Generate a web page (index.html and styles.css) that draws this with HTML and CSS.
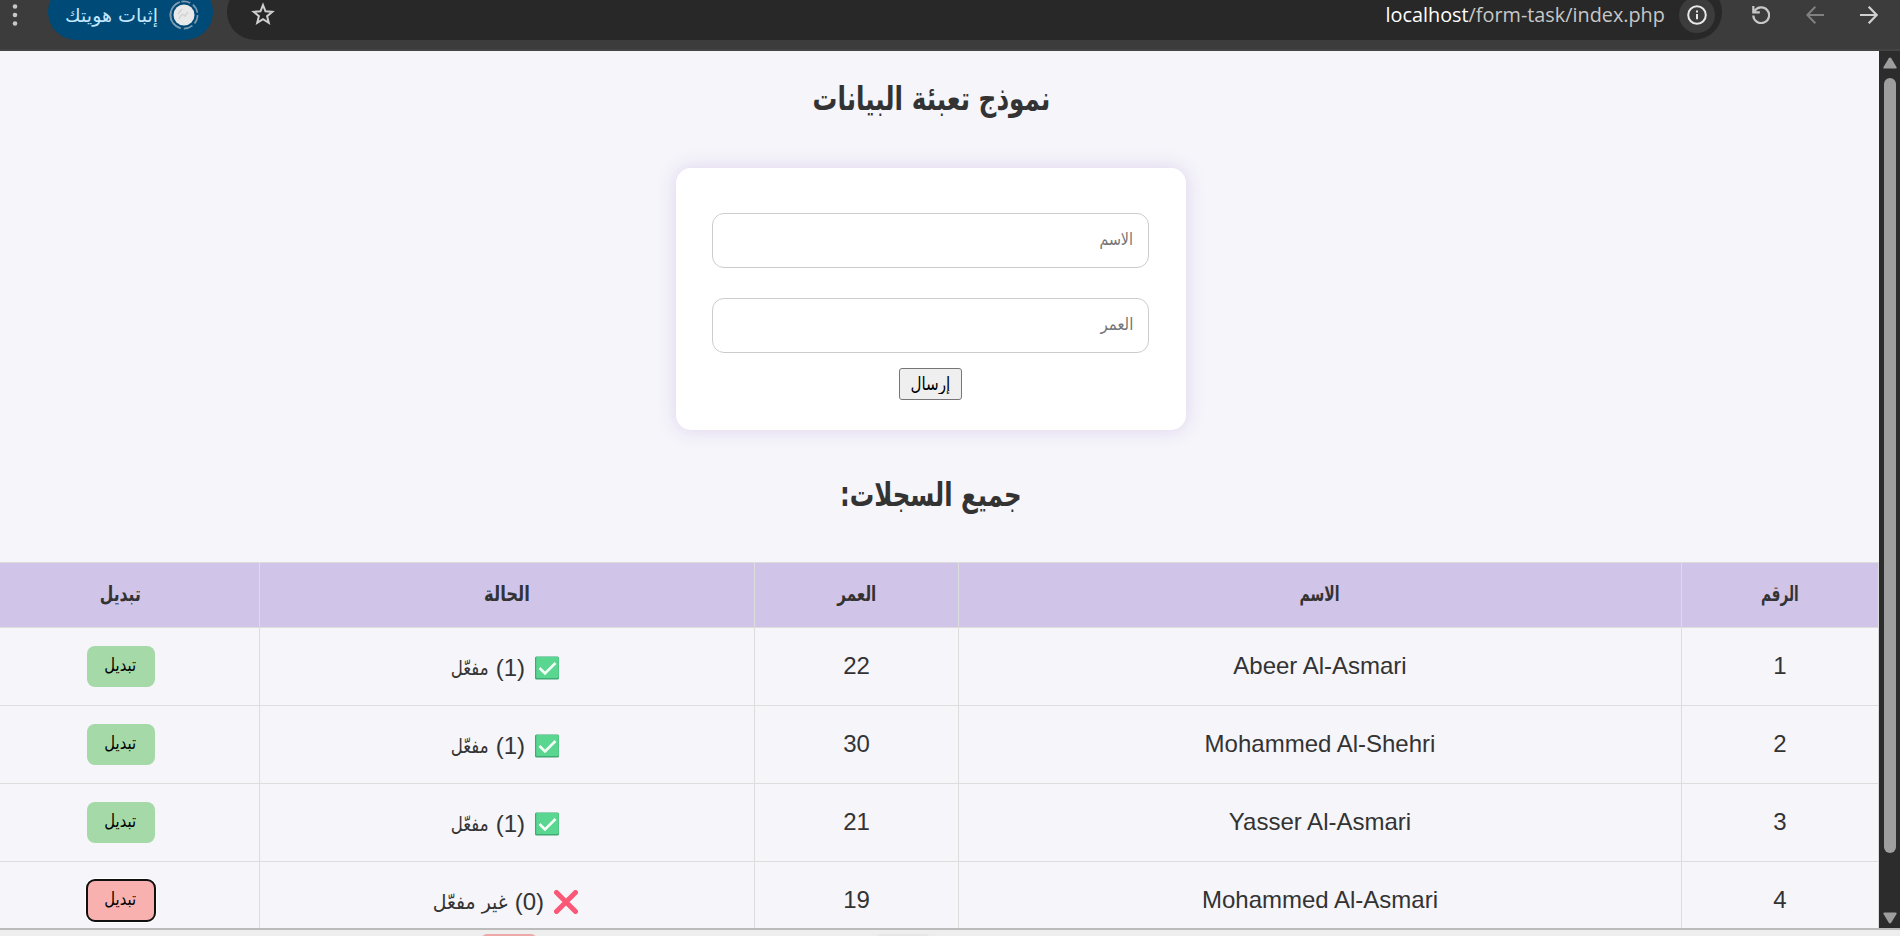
FILE: index.html
```html
<!DOCTYPE html>
<html lang="ar" dir="rtl">
<head>
<meta charset="utf-8">
<title>نموذج تعبئة البيانات</title>
<link rel="stylesheet" href="styles.css">
</head>
<body>
<div class="toolbar">
  <svg class="dots" width="6" height="24" viewBox="0 0 6 24"><circle cx="3" cy="3.5" r="2.3"/><circle cx="3" cy="12" r="2.3"/><circle cx="3" cy="20.5" r="2.3"/></svg>
  <div class="profile">
    <span class="ar verify" dir="rtl">إثبات هويتك</span>
    <svg width="30" height="30" viewBox="0 0 30 30"><circle cx="15" cy="15" r="13.6" fill="none" stroke="#7f9bb0" stroke-width="1.6" stroke-dasharray="9.2 3"/><path d="M11 2A13.6 13.6 0 0 0 11 28" fill="none" stroke="#7f9bb0" stroke-width="1.6"/><circle cx="15" cy="15" r="10.5" fill="#e9e9e9"/><path d="M10 19q3-7 6-3l3-4M9 14l4-5" fill="none" stroke="#d4d4d2" stroke-width="1.5"/></svg>
  </div>
  <div class="address">
    <svg class="star" width="24" height="24" viewBox="0 0 24 24"><path d="M12 3l2.5 6.3 6.8.5-5.2 4.4 1.7 6.6L12 17.2l-5.8 3.6 1.7-6.6-5.2-4.4 6.800-.5z" fill="none" stroke="#d0d0d0" stroke-width="2"/></svg>
    <span class="url"><b>localhost</b>/form-task/index.php</span>
    <span class="info"><svg width="20" height="20" viewBox="0 0 20 20"><circle cx="10" cy="10" r="8.800" fill="none" stroke="#e8e8e8" stroke-width="2"/><path d="M10 9v5.300M10 5.500v2" stroke="#e8e8e8" stroke-width="2"/></svg></span>
  </div>
  <svg class="reload" width="18" height="18" viewBox="0 0 18 18"><path d="M2.500 5A7.900 7.900 0 1 1 1.300 9.500M1.300 0v6.300h6.500" fill="none" stroke="#c7c7c7" stroke-width="2.200"/></svg>
  <svg class="back" width="18" height="18" viewBox="0 0 18 18"><path d="M18 9H1.500M9.300.7L1.300 9l8 8.300" fill="none" stroke="#808080" stroke-width="2"/></svg>
  <svg class="forward" width="18" height="18" viewBox="0 0 18 18"><path d="M0 9h16.500M8.700.7L16.700 9l-8 8.300" fill="none" stroke="#d0d0d0" stroke-width="2.200"/></svg>
</div>
<div class="viewport">
  <main class="page">
    <h1><span class="ar t-title">نموذج تعبئة البيانات</span></h1>
    <form class="card">
      <div class="field"><span class="ar t-name">الاسم</span></div>
      <div class="field"><span class="ar t-age">العمر</span></div>
      <button type="button" class="send"><span class="ar t-send">إرسال</span></button>
    </form>
    <h2><span class="ar t-records">جميع السجلات:</span></h2>
    <table>
      <colgroup><col class="c-id"><col class="c-name"><col class="c-age"><col class="c-state"><col class="c-toggle"></colgroup>
      <tr><th><span class="ar t-h1">الرقم</span></th><th><span class="ar t-h2">الاسم</span></th><th><span class="ar t-h3">العمر</span></th><th><span class="ar t-h4">الحالة</span></th><th><span class="ar t-h5">تبديل</span></th></tr>
      <tr><td>1</td><td>Abeer Al-Asmari</td><td>22</td><td><div class="state"><svg class="mark" viewBox="0 0 24 24"><rect y=".5" width="24" height="23" rx="1.500" fill="#3faa74"/><rect x="1.200" y="1" width="22.500" height="21" rx="1" fill="#59d68f"/><path d="M4.500 12l5.500 5.500L20.500 7" fill="none" stroke="#f4fff8" stroke-width="2.600"/></svg><span>(1)</span><span class="ar t-on">مفعّل</span></div></td><td><button type="button" class="toggle"><span class="ar t-btn">تبديل</span></button></td></tr>
      <tr><td>2</td><td>Mohammed Al-Shehri</td><td>30</td><td><div class="state"><svg class="mark" viewBox="0 0 24 24"><rect y=".5" width="24" height="23" rx="1.500" fill="#3faa74"/><rect x="1.200" y="1" width="22.500" height="21" rx="1" fill="#59d68f"/><path d="M4.500 12l5.500 5.500L20.500 7" fill="none" stroke="#f4fff8" stroke-width="2.600"/></svg><span>(1)</span><span class="ar t-on">مفعّل</span></div></td><td><button type="button" class="toggle"><span class="ar t-btn">تبديل</span></button></td></tr>
      <tr><td>3</td><td>Yasser Al-Asmari</td><td>21</td><td><div class="state"><svg class="mark" viewBox="0 0 24 24"><rect y=".5" width="24" height="23" rx="1.500" fill="#3faa74"/><rect x="1.200" y="1" width="22.500" height="21" rx="1" fill="#59d68f"/><path d="M4.500 12l5.500 5.500L20.500 7" fill="none" stroke="#f4fff8" stroke-width="2.600"/></svg><span>(1)</span><span class="ar t-on">مفعّل</span></div></td><td><button type="button" class="toggle"><span class="ar t-btn">تبديل</span></button></td></tr>
      <tr><td>4</td><td>Mohammed Al-Asmari</td><td>19</td><td><div class="state inactive"><svg class="mark" viewBox="0 0 24 24"><path d="M2.500 2.500l19 19M21.500 2.500l-19 19" fill="none" stroke="#fb5878" stroke-width="5" stroke-linecap="round"/></svg><span>(0)</span><span class="ar t-off">غير مفعّل</span></div></td><td><button type="button" class="toggle off"><span class="ar t-btn">تبديل</span></button></td></tr>
    </table>
  </main>
  <div class="scrollbar">
    <svg width="14" height="12" viewBox="0 0 14 12"><path d="M5.800 1.300Q7-.3 8.200 1.300L13.500 10q.5 1.500-1 1.500h-11q-1.500 0-1-1.500z" fill="#9e9e9e"/></svg>
    <div class="thumb"></div>
    <svg width="14" height="12" viewBox="0 0 14 12"><path d="M5.800 10.700Q7 12.300 8.200 10.700L13.500 2q.5-1.500-1-1.500h-11q-1.500 0-1 1.500z" fill="#9e9e9e"/></svg>
  </div>
</div>
<div class="taskbar"><div class="task red"></div><div class="task gray"></div></div>
</body>
</html>
```
FILE: styles.css
```css
* { box-sizing: border-box; }
body { margin: 0; height: 936px; overflow: hidden; font-family: "Liberation Sans", "DejaVu Sans", sans-serif; color: #333; background: #f5f5fa; }
svg { display: block; flex: none; }
.ar { display: inline-block; white-space: nowrap; font-family: "DejaVu Sans", sans-serif; }
.toolbar { direction: ltr; display: flex; align-items: flex-start; height: 51px; background: #3c3c3c; border-bottom: 2px solid #444; overflow: hidden; }
.dots { margin: 3px 0 0 12px; fill: #c7c7c7; }
.profile { display: flex; align-items: center; justify-content: flex-end; gap: 11px; width: 165px; height: 56px; margin: -16px 0 0 30px; padding: 6px 14px 0 0; border-radius: 28px; background: #004a77; color: #c2e7ff; }
.verify { font-size: 19px; }
.address { display: flex; align-items: flex-start; width: 1495px; height: 56px; margin: -16px 0 0 14px; border-radius: 28px; background: #282828; }
.star { margin: 18px 0 0 24px; }
.url { margin: 16px 14px 0 auto; font-family: "Open Sans", sans-serif; font-size: 20.5px; line-height: 28px; color: #c7c7c7; transform: scaleX(.967); transform-origin: right; }
.url b { font-weight: 400; color: #fff; }
.info { display: grid; place-items: center; width: 36px; height: 36px; margin: 13px 7px 0 0; border-radius: 50%; background: #3c3c3c; }
.reload { margin: 6px 0 0 30px; }
.back { margin: 6px 0 0 36px; }
.forward { margin: 6px 0 0 36px; }
.viewport { display: flex; direction: ltr; height: 877px; overflow: hidden; }
.page { direction: rtl; flex: none; width: 1879px; overflow: hidden; background: #f5f5fa; }
h1, h2 { margin: 0; padding-right: 17px; text-align: center; line-height: 40px; font-size: 30px; }
h1 { margin-top: 28px; }
.card { direction: ltr; display: flex; flex-direction: column; align-items: center; width: 510px; height: 262px; margin: 49px 693px 0 0; padding: 45px 1px 0 0; border-radius: 15px; background: #fff; box-shadow: 0 0 19px rgba(128, 60, 180, .18); }
.field { direction: rtl; width: 437px; height: 55px; padding: 13px 15px; border: 1px solid #ccc; border-radius: 12px; color: #757575; font-size: 17px; line-height: 24px; }
.field + .field { margin: 30px 0 15px; }
.send { display: grid; place-items: center; width: 63px; height: 32px; padding: 0 0 3px; border: 1px solid #767676; border-radius: 3px; background: #efefef; color: #000; font-size: 17px; }
h2 { margin-top: 45px; }
table { direction: rtl; width: 1897px; margin: 47px 0 0 0; border-collapse: collapse; table-layout: fixed; font-size: 24px; }
.c-id { width: 197px; } .c-name { width: 723px; } .c-age { width: 204px; } .c-state { width: 495px; } .c-toggle { width: 278px; }
th, td { padding: 0; border: 1px solid #ddd; text-align: center; }
th { height: 65px; padding-bottom: 3px; background: #d1c4e9; font-size: 20px; }
td { height: 78px; padding-bottom: 2px; line-height: 28px; }
td:last-child { padding-bottom: 0; }
.state { display: flex; justify-content: flex-start; align-items: center; padding: 4px 195px 0 0; }
.inactive { padding-right: 176px; }
.mark { width: 24px; height: 24px; margin-left: 10px; }
.state .ar { margin-right: 7px; font-size: 20px; transform-origin: right; }
.toggle { display: inline-grid; place-items: center; width: 68px; height: 41px; padding: 0 0 4px; border: 0; border-radius: 8px; background: #a5d9a7; color: #000; font-size: 17px; vertical-align: middle; }
.off { background: #f8b1af; outline: 2px solid #101010; outline-offset: -1px; box-shadow: 0 0 0 2px #fff; }
/* Condensed Arabic labels */
.t-title { transform: scale(.823, 1.1); }
.t-records { transform: scale(.813, 1.1); }
.t-name { transform: scaleX(.84); transform-origin: right; }
.t-age { transform: scaleX(.88); transform-origin: right; }
.t-send { transform: scale(.89, 1.1); }
.t-h1 { transform: scale(.68, 1.05); }
.t-h2 { transform: scale(.7, 1.05); }
.t-h3 { transform: scale(.76, 1.05); }
.t-h4 { transform: scale(.82, 1.05); }
.t-h5 { transform: scale(.78, 1.05); }
.t-on { transform: scaleX(.83); }
.t-off { transform: scaleX(.94); }
.t-btn { transform: scale(.87, 1.05); }
.scrollbar { display: flex; flex: none; flex-direction: column; align-items: center; width: 21px; padding-top: 6px; background: #2c2c2c; }
.thumb { flex: none; width: 12px; height: 775px; margin: 9px 0 59px; border-radius: 6px; background: #9e9e9e; }
.taskbar { direction: ltr; display: flex; height: 8px; border-top: 2px solid #bbb; background: #eee; overflow: hidden; }
.task { height: 12px; margin-top: 4px; border-radius: 6px; }
.red { width: 56px; margin-left: 481px; background: #eda9a7; }
.gray { width: 56px; margin-left: 338px; background: #e6e6e6; }
```
